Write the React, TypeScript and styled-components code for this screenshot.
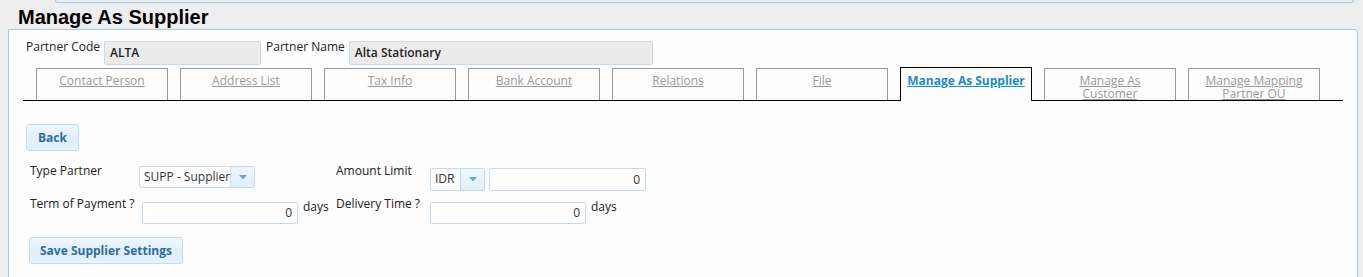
import React from "react"
import styled, { createGlobalStyle } from "styled-components"

const GlobalStyle = createGlobalStyle`
html, body {
  margin: 0;
  padding: 0;
  background: #eeeeee;
  font-family: "Open Sans", "Liberation Sans", sans-serif;
  font-size: 12px;
  color: #222;
  overflow: hidden;
}
`

const blueBorder = "#a6c9e2"
const fieldBorder = "#c5dbec"

const TopStrip = styled.div`
margin-left: 55px;
width: 1297px;
height: 2px;
background: #eeeeee;
border: 1px solid ${blueBorder};
border-top: none;
border-radius: 0 0 3px 3px;
`

const Title = styled.h1`
margin: 0;
padding-left: 18px;
height: 26px;
line-height: 28px;
font-family: "Liberation Sans", Arial, sans-serif;
font-size: 20px;
font-weight: bold;
color: #000;
`

const Panel = styled.div`
margin-left: 8px;
width: 1348px;
height: 260px;
background: #fdfdfd;
border: 1px solid ${blueBorder};
border-radius: 0 4px 0 0;
`

const PartnerRow = styled.div`
display: flex;
align-items: flex-start;
margin: 9px 0 0 17px;
`

const InlineLabel = styled.span`
line-height: 16px;
margin-right: 4px;
color: #222;
`

const ReadOnlyBox = styled.div<{ w: number }>`
box-sizing: border-box;
width: ${p => p.w}px;
height: 24px;
margin-top: 2px;
margin-right: 5px;
padding: 0 5px;
line-height: 22px;
background: #ebebeb;
border: 1px solid ${fieldBorder};
border-radius: 2px;
font-weight: 600;
color: #222;
`

const TabBar = styled.div`
display: flex;
align-items: flex-end;
gap: 12px;
box-sizing: border-box;
width: 1320px;
height: 33px;
margin: 3px 0 0 14px;
padding-left: 13px;
border-bottom: 1px solid #000;
`

const Tab = styled.div<{ active?: boolean }>`
box-sizing: border-box;
flex: 0 0 132px;
height: ${p => (p.active ? "34px" : "32px")};
margin-bottom: ${p => (p.active ? "-1px" : "0")};
padding-top: ${p => (p.active ? "6px" : "5px")};
background: #fdfdfd;
border: 1px solid ${p => (p.active ? "#000" : "#999")};
border-bottom: none;
text-align: center;
line-height: 13px;
`

const TabLink = styled.a<{ active?: boolean }>`
display: inline-block;
line-height: 13px;
color: ${p => (p.active ? "#1a8cc8" : "#9a9a9a")};
font-weight: ${p => (p.active ? "bold" : "normal")};
text-decoration: underline;
cursor: pointer;
`

const Button = styled.button`
box-sizing: border-box;
height: 27px;
padding: 0 11px;
font-family: "Open Sans", "Liberation Sans", sans-serif;
font-size: 12px;
font-weight: bold;
color: #2e6e9e;
background: linear-gradient(#f0f7fd, #dfeffc 55%, #e6f1fb);
border: 1px solid ${fieldBorder};
border-radius: 3px;
cursor: pointer;
`

const BackButton = styled(Button)`
display: block;
margin: 23px 0 0 17px;
`

const SaveButton = styled(Button)`
display: block;
margin: 13px 0 0 20px;
padding: 0 10px;
`

const FormGrid = styled.div`
display: grid;
grid-template-columns: 109px 197px 94px auto;
grid-template-rows: 28px 28px;
row-gap: 5px;
margin: 12px 0 0 21px;
align-items: start;
`

const FieldLabel = styled.div`
line-height: 16px;
color: #222;
`

const FieldCell = styled.div<{ top: number }>`
display: flex;
align-items: flex-start;
margin-top: ${p => p.top}px;
`

const SelectBox = styled.div<{ w: number; h: number }>`
box-sizing: border-box;
display: flex;
width: ${p => p.w}px;
height: ${p => p.h}px;
background: #fff;
border: 1px solid ${fieldBorder};
border-radius: 2px;
`

const SelectText = styled.div`
flex: 1;
padding-left: 4px;
line-height: 20px;
color: #333;
white-space: nowrap;
overflow: hidden;
`

const SelectArrow = styled.div`
flex: 0 0 23px;
display: flex;
align-items: center;
justify-content: center;
background: linear-gradient(#f0f7fd, #dfeffc);
border-left: 1px solid ${fieldBorder};
`

const NumberBox = styled.div<{ w: number; h: number; left?: number }>`
box-sizing: border-box;
width: ${p => p.w}px;
height: ${p => p.h}px;
margin-left: ${p => p.left || 0}px;
padding-right: 5px;
line-height: ${p => p.h - 2}px;
text-align: right;
background: #fff;
border: 1px solid ${fieldBorder};
border-radius: 2px;
color: #333;
`

const Unit = styled.span`
margin: -3px 0 0 5px;
line-height: 16px;
color: #222;
`

const Caret = () => (
  <svg width="8" height="5" viewBox="0 0 8 5">
    <path d="M0 0h8L4 4.5z" fill="#6fa5d6" />
  </svg>
)

const Select: React.FC<{ value: string; w: number; h: number }> = ({ value, w, h }) => (
  <SelectBox w={w} h={h}>
    <SelectText>{value}</SelectText>
    <SelectArrow><Caret /></SelectArrow>
  </SelectBox>
)

const tabs: { label: React.ReactNode; active?: boolean }[] = [
  { label: "Contact Person" },
  { label: "Address List" },
  { label: "Tax Info" },
  { label: "Bank Account" },
  { label: "Relations" },
  { label: "File" },
  { label: "Manage As Supplier", active: true },
  { label: <>Manage As<br />Customer</> },
  { label: <>Manage Mapping<br />Partner OU</> },
]

const App: React.FC = () => {
  return (
    <>
      <GlobalStyle />
      <TopStrip />
      <Title>Manage As Supplier</Title>
      <Panel>
        <PartnerRow>
          <InlineLabel>Partner Code</InlineLabel>
          <ReadOnlyBox w={157}>ALTA</ReadOnlyBox>
          <InlineLabel>Partner Name</InlineLabel>
          <ReadOnlyBox w={304}>Alta Stationary</ReadOnlyBox>
        </PartnerRow>
        <TabBar>
          {tabs.map((t, i) => (
            <Tab key={i} active={t.active}>
              <TabLink active={t.active}>{t.label}</TabLink>
            </Tab>
          ))}
        </TabBar>
        <BackButton>Back</BackButton>
        <FormGrid>
          <FieldLabel>Type Partner</FieldLabel>
          <FieldCell top={3}>
            <Select value="SUPP - Supplier" w={116} h={22} />
          </FieldCell>
          <FieldLabel>Amount Limit</FieldLabel>
          <FieldCell top={5}>
            <Select value="IDR" w={55} h={23} />
            <NumberBox w={157} h={23} left={4}>0</NumberBox>
          </FieldCell>

          <FieldLabel>Term of Payment ?</FieldLabel>
          <FieldCell top={6}>
            <NumberBox w={156} h={22} left={3}>0</NumberBox>
            <Unit>days</Unit>
          </FieldCell>
          <FieldLabel>Delivery Time ?</FieldLabel>
          <FieldCell top={6}>
            <NumberBox w={156} h={22}>0</NumberBox>
            <Unit>days</Unit>
          </FieldCell>
        </FormGrid>
        <SaveButton>Save Supplier Settings</SaveButton>
      </Panel>
    </>
  )
}

export default App
